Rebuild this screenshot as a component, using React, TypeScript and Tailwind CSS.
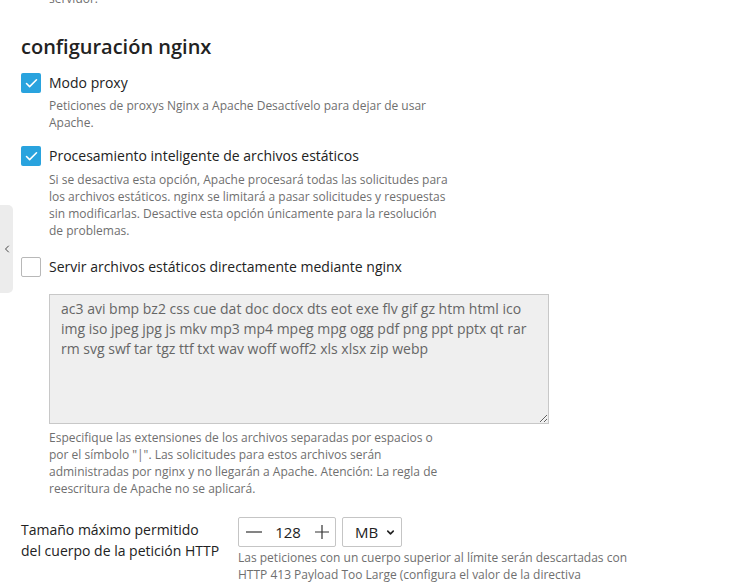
import { ChevronLeft, ChevronDown, Check } from "lucide-react";

const desc = "text-[12px] leading-[17px] text-[#6f6f6f]";

function Box({ checked }: { checked: boolean }) {
  return checked ? (
    <span className="flex h-[20px] w-[20px] shrink-0 items-center justify-center rounded-[2px] bg-[#29a3de]">
      <Check className="h-[15px] w-[15px] text-white" strokeWidth={2.5} />
    </span>
  ) : (
    <span className="h-[20px] w-[20px] shrink-0 rounded-[2px] border border-[#b8b8b8] bg-white" />
  );
}

function Option({ checked, label }: { checked: boolean; label: string }) {
  return (
    <div className="flex items-center gap-[8px]">
      <Box checked={checked} />
      <span className="text-[14px] leading-[20px] text-[#222]">{label}</span>
    </div>
  );
}

const exts =
  "ac3 avi bmp bz2 css cue dat doc docx dts eot exe flv gif gz htm html ico img iso jpeg jpg js mkv mp3 mp4 mpeg mpg ogg pdf png ppt pptx qt rar rm svg swf tar tgz ttf txt wav woff woff2 xls xlsx zip webp";

export default function App() {
  return (
    <div
      className="relative h-[584px] w-[753px] overflow-hidden bg-white"
      style={{ fontFamily: '"Open Sans", sans-serif' }}
    >
      {/* side tab */}
      <div className="absolute left-0 top-[205px] flex h-[88px] w-[13px] items-center justify-center rounded-r-[5px] bg-[#ececec]">
        <ChevronLeft className="h-[12px] w-[12px] text-[#333]" strokeWidth={1.8} />
      </div>

      <div className="px-[21px]">
        <p className={`${desc} -mt-[10px] pl-[28px]`}>servidor.</p>

        <h2 className="mt-[26px] text-[20px] font-semibold leading-[28px] text-[#222]">
          configuración nginx
        </h2>

        <div className="mt-[12px]">
          <Option checked label="Modo proxy" />
          <p className={`${desc} mt-[4px] max-w-[428px] pl-[28px]`}>
            Peticiones de proxys Nginx a Apache Desactívelo para dejar de usar Apache.
          </p>
        </div>

        <div className="mt-[15px]">
          <Option checked label="Procesamiento inteligente de archivos estáticos" />
          <p className={`${desc} mt-[5px] max-w-[428px] pl-[28px]`}>
            Si se desactiva esta opción, Apache procesará todas las solicitudes para
            los archivos estáticos. nginx se limitará a pasar solicitudes y respuestas
            sin modificarlas. Desactive esta opción únicamente para la resolución de
            problemas.
          </p>
        </div>

        <div className="mt-[18px]">
          <Option checked={false} label="Servir archivos estáticos directamente mediante nginx" />
          <div className="mt-[17px] pl-[28px]">
            <textarea
              readOnly
              defaultValue={exts}
              className="block h-[130px] w-[500px] border border-[#c8c8c8] bg-[#efefef] px-[11px] pt-[4px] text-[14px] leading-[20px] text-[#666] outline-none"
              style={{ fontFamily: '"Open Sans", sans-serif' }}
            />
            <p className={`${desc} mt-[5px] max-w-[400px]`}>
              Especifique las extensiones de los archivos separadas por espacios o por
              el símbolo "|". Las solicitudes para estos archivos serán administradas
              por nginx y no llegarán a Apache. Atención: La regla de reescritura de
              Apache no se aplicará.
            </p>
          </div>
        </div>

        <div className="mt-[20px] flex">
          <div className="w-[217px] shrink-0 whitespace-nowrap pt-[2px] text-[14px] leading-[21px] text-[#222]">
            Tamaño máximo permitido
            <br />
            del cuerpo de la petición HTTP
          </div>
          <div>
            <div className="flex gap-[6px]">
              <div className="flex h-[30px] w-[98px] items-center justify-between rounded-[2px] border border-[#c5c5c5] pl-[6px] pr-[4px] text-[15px] text-[#222]">
                <svg width="18" height="18" viewBox="0 0 18 18" className="text-[#333]">
                  <path d="M1 9h16" stroke="currentColor" strokeWidth="1.2" />
                </svg>
                <span>128</span>
                <svg width="18" height="18" viewBox="0 0 18 18" className="text-[#333]">
                  <path d="M2 9h14M9 2v14" stroke="currentColor" strokeWidth="1.2" />
                </svg>
              </div>
              <div className="flex h-[30px] w-[60px] items-center justify-between rounded-[2px] border border-[#c5c5c5] pl-[12px] pr-[5px] text-[15px] text-[#222]">
                <span>MB</span>
                <ChevronDown className="h-[11px] w-[11px] text-[#222]" strokeWidth={3.5} />
              </div>
            </div>
            <p className={`${desc} mt-[2px] max-w-[400px]`}>
              Las peticiones con un cuerpo superior al límite serán descartadas con HTTP
              413 Payload Too Large (configura el valor de la directiva
              client_max_body_size).
            </p>
          </div>
        </div>
      </div>
    </div>
  );
}
